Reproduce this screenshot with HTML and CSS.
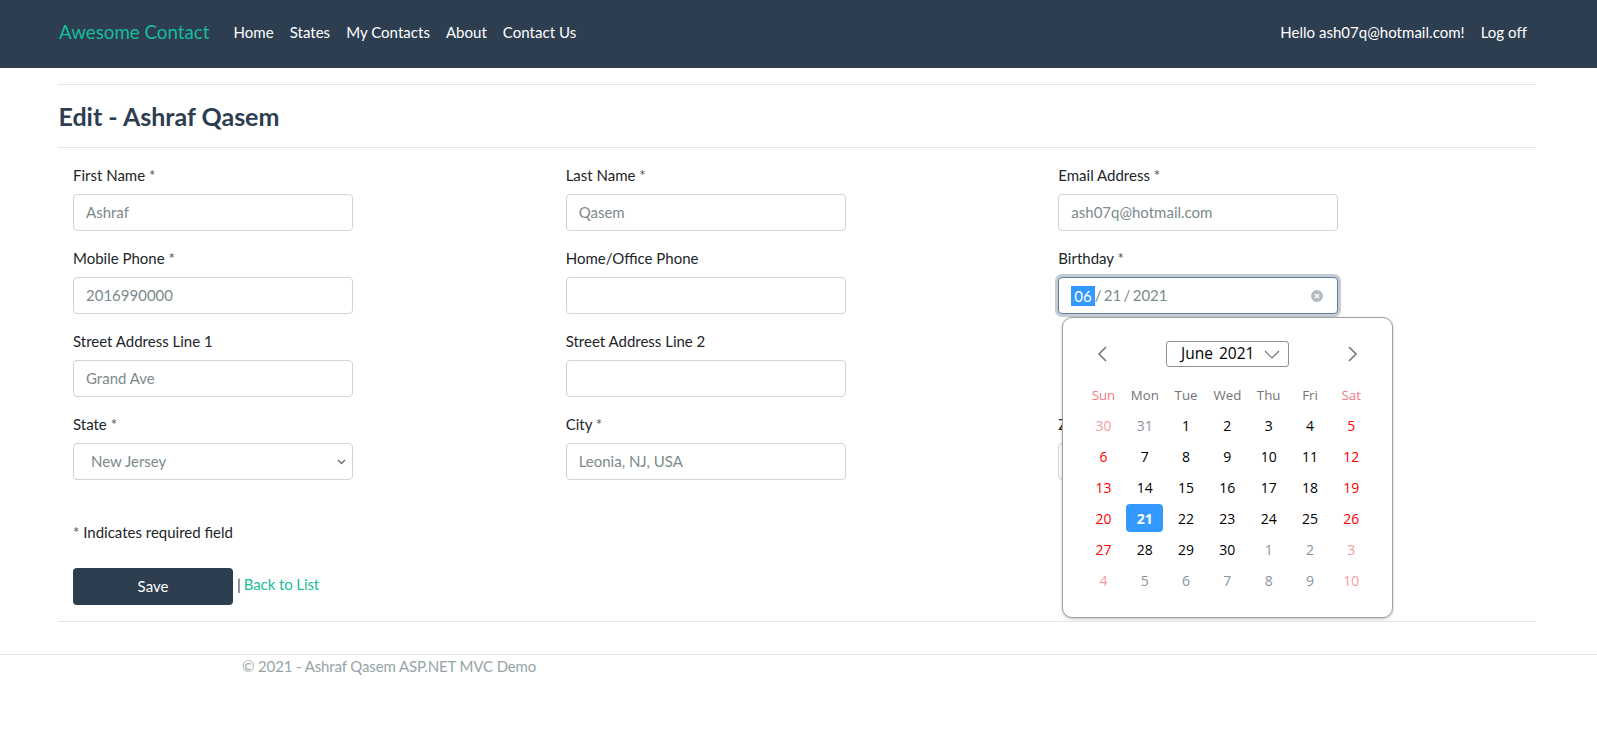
FILE: index.html
```html
<!DOCTYPE html>
<html>
<head>
    <title>Edit - Ashraf Qasem</title>
    <link rel="stylesheet" href="styles.css">
</head>
<body>
    <nav class="navbar">
        <a class="brand" href="#">Awesome Contact</a>
        <a class="nav-link" href="#">Home</a>
        <a class="nav-link" href="#">States</a>
        <a class="nav-link" href="#">My Contacts</a>
        <a class="nav-link" href="#">About</a>
        <a class="nav-link" href="#">Contact Us</a>
        <span class="nav-right">
            <a class="nav-link" href="#">Hello ash07q@hotmail.com!</a>
            <a class="nav-link" href="#">Log off</a>
        </span>
    </nav>

    <div class="body-content">
        <hr>
        <h2>Edit - Ashraf Qasem</h2>
        <hr class="title-rule">

        <form class="form-grid">
            <div class="field">
                <label>First Name <span class="req">*</span></label>
                <input class="control" type="text" value="Ashraf">
            </div>
            <div class="field">
                <label>Last Name <span class="req">*</span></label>
                <input class="control" type="text" value="Qasem">
            </div>
            <div class="field">
                <label>Email Address <span class="req">*</span></label>
                <input class="control" type="text" value="ash07q@hotmail.com">
            </div>

            <div class="field">
                <label>Mobile Phone <span class="req">*</span></label>
                <input class="control" type="text" value="2016990000">
            </div>
            <div class="field">
                <label>Home/Office Phone</label>
                <input class="control" type="text">
            </div>
            <div class="field date-field">
                <label>Birthday <span class="req">*</span></label>
                <div class="control date-control">
                    <span class="date-part">06</span><span class="date-rest">/ 21 / 2021</span>
                    <svg class="date-clear" width="12" height="12" viewBox="0 0 12 12">
                        <circle cx="6" cy="6" r="6" fill="#b4bbc0"/>
                        <path d="M4 4l4 4M8 4l-4 4" stroke="#fff" stroke-width="1.3" fill="none"/>
                    </svg>
                </div>

                <div class="calendar">
                    <div class="cal-head">
                        <svg width="12" height="18" viewBox="0 0 12 18"><path d="M10 2L3 9l7 7" stroke="#757575" stroke-width="1.6" fill="none"/></svg>
                        <div class="cal-month">
                            June 2021
                            <svg width="16" height="9" viewBox="0 0 16 9"><path d="M1 1l7 7 7-7" stroke="#757575" stroke-width="1.2" fill="none"/></svg>
                        </div>
                        <svg width="12" height="18" viewBox="0 0 12 18"><path d="M2 2l7 7-7 7" stroke="#757575" stroke-width="1.6" fill="none"/></svg>
                    </div>
                    <div class="cal-grid">
                        <span class="dow wkend">Sun</span><span class="dow">Mon</span><span class="dow">Tue</span><span class="dow">Wed</span><span class="dow">Thu</span><span class="dow">Fri</span><span class="dow wkend">Sat</span>

                        <span class="day wkend off">30</span><span class="day off">31</span><span class="day">1</span><span class="day">2</span><span class="day">3</span><span class="day">4</span><span class="day wkend">5</span>
                        <span class="day wkend">6</span><span class="day">7</span><span class="day">8</span><span class="day">9</span><span class="day">10</span><span class="day">11</span><span class="day wkend">12</span>
                        <span class="day wkend">13</span><span class="day">14</span><span class="day">15</span><span class="day">16</span><span class="day">17</span><span class="day">18</span><span class="day wkend">19</span>
                        <span class="day wkend">20</span><span class="day selected">21</span><span class="day">22</span><span class="day">23</span><span class="day">24</span><span class="day">25</span><span class="day wkend">26</span>
                        <span class="day wkend">27</span><span class="day">28</span><span class="day">29</span><span class="day">30</span><span class="day off">1</span><span class="day off">2</span><span class="day wkend off">3</span>
                        <span class="day wkend off">4</span><span class="day off">5</span><span class="day off">6</span><span class="day off">7</span><span class="day off">8</span><span class="day off">9</span><span class="day wkend off">10</span>
                    </div>
                </div>
            </div>

            <div class="field">
                <label>Street Address Line 1</label>
                <input class="control" type="text" value="Grand Ave">
            </div>
            <div class="field">
                <label>Street Address Line 2</label>
                <input class="control" type="text">
            </div>
            <div class="field"></div>

            <div class="field">
                <label>State <span class="req">*</span></label>
                <div class="control select-control">
                    <span>New Jersey</span>
                    <svg width="9" height="6" viewBox="0 0 9 6"><path d="M1 1l3.500 3.500L8 1" stroke="#6a6a6a" stroke-width="1.4" fill="none"/></svg>
                </div>
            </div>
            <div class="field">
                <label>City <span class="req">*</span></label>
                <input class="control" type="text" value="Leonia, NJ, USA">
            </div>
            <div class="field">
                <label>Zip Code <span class="req">*</span></label>
                <input class="control" type="text">
            </div>
        </form>

        <p class="req-note"><span class="req">*</span> Indicates required field</p>

        <div class="actions">
            <button class="btn-save" type="button">Save</button>
            <span class="sep">|</span>
            <a class="back-link" href="#">Back to List</a>
        </div>
        <hr class="bottom-rule">
    </div>

    <footer class="footer">
        <p>&copy; 2021 - Ashraf Qasem ASP.NET MVC Demo</p>
    </footer>
</body>
</html>
```

FILE: styles.css
```css
body {
    font-family: Lato, "Liberation Sans", sans-serif;
    font-size: 15px;
    line-height: 1.5;
    color: #212529;
    background-color: #fff;
    margin: 0;
}

a {
    text-decoration: none;
}

hr {
    border: none;
    border-top: 1px solid #e3e6e8;
    margin: 0;
}

/* top bar */
.navbar {
    display: flex;
    align-items: center;
    box-sizing: border-box;
    height: 68px;
    padding: 0 59px 3px;
    background-color: #2c3e50;
}

.brand {
    color: #18bc9c;
    font-size: 18.75px;
    margin-right: 16px;
}

.nav-link {
    color: #fff;
    padding: 0 8px;
    letter-spacing: 0.03px;
}

.nav-right {
    display: flex;
    margin-left: auto;
    padding-right: 3px;
}

/* page */
.body-content {
    margin: 0 61px 0 58px;
    padding-top: 16px;
}

h2 {
    color: #2c3e50;
    font-size: 25px;
    font-weight: 700;
    line-height: 30px;
    margin: 16px 0 16px 0.5px;
}

.form-grid {
    display: grid;
    grid-template-columns: repeat(3, 1fr);
    row-gap: 15px;
    padding-top: 17px;
}

.field {
    position: relative;
    padding: 0 15px;
    min-height: 68px;
}

label {
    display: block;
    font-size: 15px;
    line-height: 20px;
    margin-bottom: 9px;
}

.req {
    color: #555;
}

.control {
    display: block;
    box-sizing: border-box;
    width: 280px;
    height: 37px;
    padding: 0 12px;
    font-family: inherit;
    font-size: 15px;
    color: #7b8a8b;
    border: 1px solid #ced4da;
    border-radius: 4px;
    background-color: #fff;
}

input.control {
    padding-bottom: 2px;
}

.select-control {
    display: flex;
    align-items: center;
    justify-content: space-between;
    padding: 0 6px 0 17px;
}

.date-control {
    display: flex;
    align-items: center;
    border-color: #5e7c9b;
    box-shadow: 0 0 0 3px #c5ccd3;
}

.date-part {
    background-color: #3399ff;
    color: #fff;
    padding: 0 3px;
    line-height: 20px;
}

.date-rest {
    word-spacing: -1.5px;
}

.date-clear {
    margin-left: auto;
    margin-right: 2px;
}

/* date popup */
.calendar {
    position: absolute;
    z-index: 10;
    top: 69px;
    left: 19px;
    box-sizing: border-box;
    width: 331px;
    height: 301px;
    padding: 0 20px 0 19.5px;
    color: #000;
    font-family: "Open Sans", "Noto Sans", sans-serif;
    font-size: 14px;
    background-color: #fff;
    border: 1px solid #a0a0a0;
    border-radius: 10px;
    box-shadow: 0 1px 3px rgba(0, 0, 0, 0.25);
}

.cal-head {
    display: flex;
    align-items: center;
    justify-content: space-between;
    height: 26px;
    margin-top: 23px;
    padding: 0 13px;
}

.cal-month {
    display: flex;
    align-items: center;
    justify-content: space-between;
    box-sizing: border-box;
    width: 123px;
    height: 26px;
    padding: 0 8px 0 14px;
    font-size: 15.5px;
    word-spacing: 2px;
    border: 1px solid #8f8f8f;
    border-radius: 3px;
}

.cal-grid {
    display: grid;
    grid-template-columns: repeat(7, 41.3px);
    grid-template-rows: 29px;
    grid-auto-rows: 31px;
    margin-top: 14px;
    text-align: center;
}

.dow,
.day {
    display: flex;
    align-items: center;
    justify-content: center;
}

.dow {
    color: #757575;
    font-size: 13.3px;
}

.wkend {
    color: #f00;
}

.dow.wkend {
    color: #f4777f;
}

.off {
    color: #8a939c;
}

.off.wkend {
    color: #f79ba0;
}

.selected {
    width: 37px;
    height: 28px;
    margin: 1px auto 0;
    color: #fff;
    font-weight: 700;
    background-color: #3399ff;
    border-radius: 4px;
}

/* below the form */
.req-note {
    font-size: 15px;
    margin: 39px 15px 0;
}

.actions {
    display: flex;
    align-items: center;
    margin: 24px 15px 0;
    font-size: 15px;
}

.btn-save {
    width: 160px;
    height: 37px;
    padding: 0;
    color: #fff;
    font-family: inherit;
    font-size: 15px;
    background-color: #2c3e50;
    border: none;
    border-radius: 4px;
}

.sep {
    color: #2c3e50;
    margin: -3px 3px 0 4px;
}

.back-link {
    color: #18bc9c;
    margin-top: -3px;
    letter-spacing: -0.1px;
}

.bottom-rule {
    margin-top: 16px;
}

.footer {
    margin-top: 32px;
    border-top: 1px solid #e3e6e8;
    color: #95a5a6;
    padding-left: 242px;
    letter-spacing: -0.13px;
}

.footer p {
    margin: 0;
}
```
